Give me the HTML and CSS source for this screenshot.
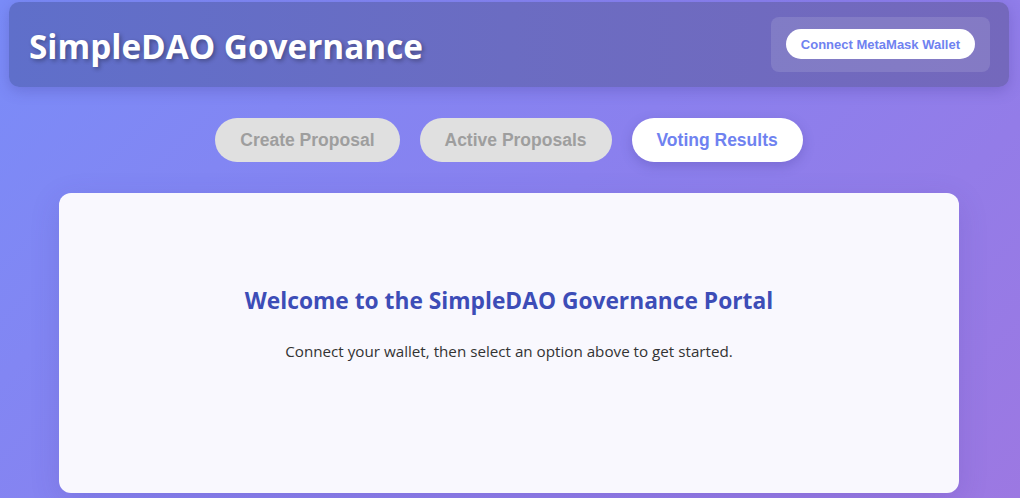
FILE: index.html
```html
<!DOCTYPE html>
<html lang="en">
<head>
<meta charset="utf-8">
<title>SimpleDAO Governance</title>
<link rel="stylesheet" href="styles.css">
</head>
<body>
<div class="page">
  <header class="header">
    <h1 class="title">SimpleDAO Governance</h1>
    <div class="wallet">
      <button class="wallet-btn">Connect MetaMask Wallet</button>
    </div>
  </header>
  <nav class="tabs">
    <button class="tab">Create Proposal</button>
    <button class="tab">Active Proposals</button>
    <button class="tab tab-active">Voting Results</button>
  </nav>
  <main class="card">
    <h2 class="welcome">Welcome to the SimpleDAO Governance Portal</h2>
    <p class="intro">Connect your wallet, then select an option above to get started.</p>
  </main>
</div>
</body>
</html>
```
FILE: styles.css
```css
html, body {
  margin: 0;
  padding: 0;
  height: 100%;
}
body {
  background: linear-gradient(135deg, #7a8cf8 0%, #8a80ee 50%, #9c78e2 100%);
  font-family: "Open Sans", "Noto Sans", sans-serif;
  overflow: hidden;
}
.page {
  width: 1000px;
  margin: 0 0 0 9px;
  padding-top: 2px;
}
.header {
  height: 85px;
  box-sizing: border-box;
  display: flex;
  align-items: center;
  justify-content: space-between;
  padding: 0 19px 0 20px;
  border-radius: 10px;
  background: linear-gradient(90deg, #5f6fca 0%, #6b6cc2 50%, #7468bc 100%);
  box-shadow: 0 4px 14px rgba(60, 50, 140, 0.25);
}
.title {
  margin: 4px 0 0 0;
  color: #fff;
  font-size: 33.3px;
  font-weight: 700;
  line-height: 1.2;
  text-shadow: 2px 2px 4px rgba(0, 0, 0, 0.3);
}
.wallet {
  background: rgba(255, 255, 255, 0.12);
  border-radius: 8px;
  padding: 12px 15px 13px;
}
.wallet-btn {
  display: block;
  height: 30px;
  padding: 0 15px;
  border: none;
  border-radius: 15px;
  background: #fff;
  color: #6f82f0;
  font-family: "Liberation Sans", Arial, sans-serif;
  font-weight: 700;
  font-size: 13px;
}
.tabs {
  display: flex;
  justify-content: center;
  gap: 20px;
  margin-top: 31px;
}
.tab {
  height: 44px;
  padding: 0 25px;
  border: none;
  border-radius: 22px;
  background: #e0e0e0;
  color: #9e9e9e;
  font-family: "Liberation Sans", Arial, sans-serif;
  font-weight: 700;
  font-size: 17.5px;
}
.tab-active {
  background: #fff;
  color: #6f82f0;
  box-shadow: 0 4px 12px rgba(60, 50, 140, 0.25);
}
.card {
  width: 900px;
  height: 300px;
  box-sizing: border-box;
  margin: 31px auto 0;
  background: #f9f8fe;
  border-radius: 12px;
  box-shadow: 0 8px 30px rgba(60, 50, 140, 0.15);
  display: flex;
  flex-direction: column;
  align-items: center;
  padding-top: 92px;
}
.welcome {
  margin: 0;
  color: #3d4db7;
  font-size: 22.75px;
  font-weight: 700;
  line-height: 31px;
}
.intro {
  margin: 25px 0 0;
  color: #333;
  font-size: 15.2px;
  line-height: 21px;
}
```
